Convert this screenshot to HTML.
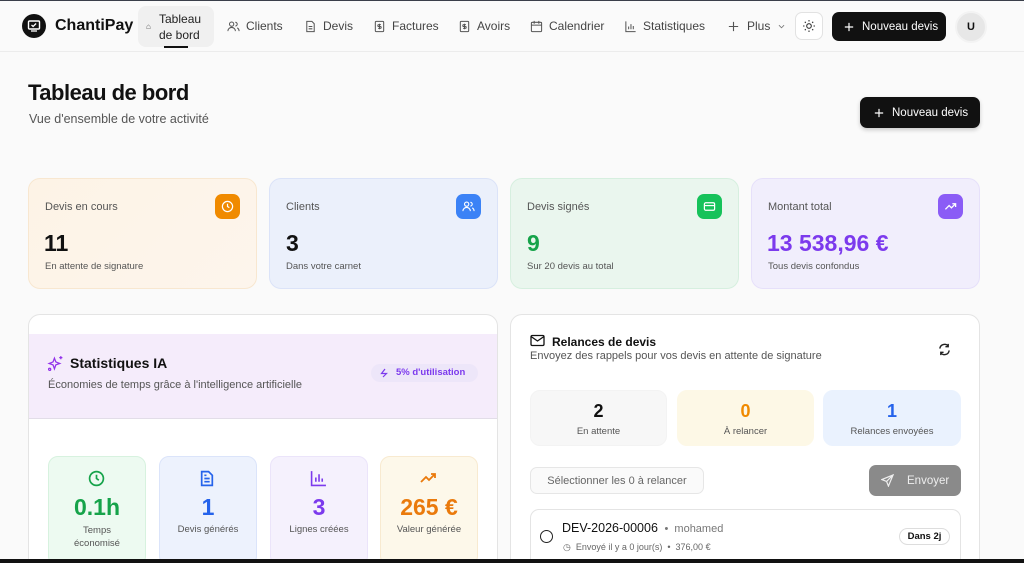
<!DOCTYPE html>
<html style="overflow:hidden;height:563px"><head><meta charset="utf-8"><style>
*{box-sizing:border-box;margin:0;padding:0}
body{width:1024px;height:563px;overflow:hidden;background:#fafafa;font-family:"Liberation Sans",sans-serif;color:#111;position:relative}
.a{position:absolute}
.hdr{left:0;top:0;width:1024px;height:52px;background:#fafafa;border-top:1px solid #3a3f4a;border-bottom:1px solid #ececec}
.nav{font-size:12px;color:#444;display:flex;align-items:center;gap:6px;top:19px}
.nav svg{width:13px;height:13px}
.card{border-radius:12px;border:1px solid}
.lbl{font-size:11px;color:#555}
.ic{width:25px;height:25px;border-radius:7px;display:flex;align-items:center;justify-content:center}
.big{font-size:23px;font-weight:bold}
.sub{font-size:9.5px;color:#555}
.mini{border-radius:10px;border:1px solid;text-align:center}
</style></head><body>
<div class="a hdr"></div>
<div class="a" style="left:22px;top:14px;width:24px;height:24px;border-radius:50%;background:#111"></div>
<svg class="a" style="left:27px;top:19px" width="14" height="14" viewBox="0 0 14 14"><rect x="1.5" y="2" width="11" height="8" rx="1" fill="none" stroke="#fff" stroke-width="1.4"/><path d="M4.5 6l1.6 1.5 3-3" fill="none" stroke="#fff" stroke-width="1.3"/><path d="M4 12h6" stroke="#fff" stroke-width="1.3"/></svg>
<div class="a" style="left:55px;top:17px;font-size:16px;font-weight:bold">ChantiPay</div>
<div class="a" style="left:138px;top:6px;width:76px;height:41px;background:#f0f0f0;border-radius:8px"></div>
<div class="a" style="left:146px;top:22px;font-size:8px;color:#555">⌂</div>
<div class="a" style="left:159px;top:11px;font-size:12px;line-height:16px;color:#222">Tableau<br>de bord</div>
<div class="a" style="left:164px;top:46px;width:24px;height:2px;background:#111"></div>
<div class="a nav" style="left:227px"><svg viewBox="0 0 14 14" fill="none" stroke="#555" stroke-width="1.1"><circle cx="5" cy="4.5" r="2.3"/><path d="M1 12c0-2.5 2-4 4-4s4 1.5 4 4M9 2.5a2 2 0 010 4M11 8.5c1.2.6 2 1.8 2 3.5"/></svg>Clients</div>
<div class="a nav" style="left:304px"><svg viewBox="0 0 14 14" fill="none" stroke="#555" stroke-width="1.1"><path d="M3 1.5h5.5L11 4v8.5H3z M5 7h4M5 9.5h4"/></svg>Devis</div>
<div class="a nav" style="left:373px"><svg viewBox="0 0 14 14" fill="none" stroke="#555" stroke-width="1.1"><rect x="2.5" y="1.5" width="9" height="11" rx="1"/><path d="M8.5 5H6.2a1 1 0 000 2h1.6a1 1 0 010 2H5.5M7 4v6"/></svg>Factures</div>
<div class="a nav" style="left:458px"><svg viewBox="0 0 14 14" fill="none" stroke="#555" stroke-width="1.1"><rect x="2.5" y="1.5" width="9" height="11" rx="1"/><path d="M8.5 5H6.2a1 1 0 000 2h1.6a1 1 0 010 2H5.5M7 4v6"/></svg>Avoirs</div>
<div class="a nav" style="left:530px"><svg viewBox="0 0 14 14" fill="none" stroke="#555" stroke-width="1.1"><rect x="1.5" y="2.5" width="11" height="10" rx="1"/><path d="M1.5 5.5h11M4.5 1v3M9.5 1v3"/></svg>Calendrier</div>
<div class="a nav" style="left:624px"><svg viewBox="0 0 14 14" fill="none" stroke="#555" stroke-width="1.1"><path d="M2 1.5v11h10.5M5 10V7M7.5 10V4.5M10 10V6.5"/></svg>Statistiques</div>
<div class="a nav" style="left:727px;gap:7px"><svg viewBox="0 0 14 14" fill="none" stroke="#555" stroke-width="1.2"><path d="M7 2v10M2 7h10"/></svg>Plus <svg viewBox="0 0 14 14" style="width:9px;height:9px" fill="none" stroke="#777" stroke-width="1.3"><path d="M3 5l4 4 4-4"/></svg></div>
<div class="a" style="left:795px;top:12px;width:28px;height:28px;border:1px solid #e2e2e2;border-radius:7px;background:#fff"></div>
<svg class="a" style="left:802px;top:19px" width="14" height="14" viewBox="0 0 14 14" fill="none" stroke="#333" stroke-width="1.1"><circle cx="7" cy="7" r="2.3"/><path d="M7 1v1.5M7 11.5V13M1 7h1.5M11.5 7H13M2.8 2.8l1 1M10.2 10.2l1 1M2.8 11.2l1-1M10.2 3.8l1-1"/></svg>
<div class="a" style="left:832px;top:12px;width:114px;height:29px;background:#111;border-radius:7px;color:#fff;font-size:11.5px;display:flex;align-items:center;padding-left:12px;gap:8px;white-space:nowrap"><svg width="10" height="10" viewBox="0 0 12 12" stroke="#fff" stroke-width="1.4"><path d="M6 1v10M1 6h10"/></svg>Nouveau devis</div>
<div class="a" style="left:955px;top:11px;width:32px;height:32px;border-radius:50%;background:#e7e7e7;border:2px solid #f3f3f3;text-align:center;line-height:28px;font-size:11px;font-weight:bold">U</div>

<div class="a" style="left:28px;top:80px;font-size:22px;font-weight:bold;letter-spacing:-.5px">Tableau de bord</div>
<div class="a" style="left:29px;top:112px;font-size:12.5px;color:#555">Vue d'ensemble de votre activité</div>
<div class="a" style="left:860px;top:97px;width:120px;height:31px;background:#111;border-radius:7px;color:#fff;font-size:11.5px;display:flex;align-items:center;padding-left:14px;gap:8px;white-space:nowrap;box-shadow:0 2px 4px rgba(0,0,0,.2)"><svg width="10" height="10" viewBox="0 0 12 12" stroke="#fff" stroke-width="1.4"><path d="M6 1v10M1 6h10"/></svg>Nouveau devis</div>

<div class="a card" style="left:28px;top:178px;width:229px;height:111px;background:linear-gradient(135deg,#fdf3e6,#fdf5ec);border-color:#f8e7d0"></div>
<div class="a lbl" style="left:45px;top:201px">Devis en cours</div>
<div class="a ic" style="left:215px;top:194px;background:#f08a00"><svg width="13" height="13" viewBox="0 0 14 14" fill="none" stroke="#fff" stroke-width="1.3"><circle cx="7" cy="7" r="5.5"/><path d="M7 4v3l2 1.2"/></svg></div>
<div class="a big" style="left:44px;top:230px">11</div>
<div class="a sub" style="left:45px;top:261px">En attente de signature</div>

<div class="a card" style="left:269px;top:178px;width:229px;height:111px;background:#ebf0fb;border-color:#dbe3f8"></div>
<div class="a lbl" style="left:286px;top:201px">Clients</div>
<div class="a ic" style="left:456px;top:194px;background:#3b82f6"><svg width="13" height="13" viewBox="0 0 14 14" fill="none" stroke="#fff" stroke-width="1.2"><circle cx="5" cy="4.5" r="2.3"/><path d="M1 12c0-2.5 2-4 4-4s4 1.5 4 4M9 2.5a2 2 0 010 4M11 8.5c1.2.6 2 1.8 2 3.5"/></svg></div>
<div class="a big" style="left:286px;top:230px">3</div>
<div class="a sub" style="left:286px;top:261px">Dans votre carnet</div>

<div class="a card" style="left:510px;top:178px;width:229px;height:111px;background:#eaf6ee;border-color:#d6efdf"></div>
<div class="a lbl" style="left:527px;top:201px">Devis signés</div>
<div class="a ic" style="left:697px;top:194px;background:#16c25a"><svg width="13" height="13" viewBox="0 0 14 14" fill="none" stroke="#fff" stroke-width="1.3"><rect x="1.5" y="3" width="11" height="8" rx="1.5"/><path d="M1.5 6h11"/></svg></div>
<div class="a big" style="left:527px;top:230px;color:#16a34a">9</div>
<div class="a sub" style="left:527px;top:261px">Sur 20 devis au total</div>

<div class="a card" style="left:751px;top:178px;width:229px;height:111px;background:#f1eefc;border-color:#e6e0fa"></div>
<div class="a lbl" style="left:768px;top:201px">Montant total</div>
<div class="a ic" style="left:938px;top:194px;background:#8b5cf6"><svg width="13" height="13" viewBox="0 0 14 14" fill="none" stroke="#fff" stroke-width="1.4"><path d="M1.5 10l4-4 2.5 2.5 4.5-4.5M9 4h3.5v3.5"/></svg></div>
<div class="a big" style="left:767px;top:230px;color:#7c3aed">13 538,96 €</div>
<div class="a sub" style="left:768px;top:261px">Tous devis confondus</div>

<div class="a" style="left:28px;top:314px;width:470px;height:245px;background:#fff;border:1px solid #e4e4e4;border-bottom:none;border-radius:12px 12px 0 0;overflow:hidden">
 <div style="position:absolute;left:0;top:19px;width:100%;height:85px;background:#f5ecfb;border-bottom:1px solid #e2dde8"></div>
</div>
<svg class="a" style="left:47px;top:355px" width="17" height="17" viewBox="0 0 16 16" fill="none" stroke="#9333ea" stroke-width="1.2"><path d="M7 3l1.3 3.5L12 8l-3.7 1.3L7 13l-1.3-3.7L2 8l3.7-1.5z"/><path d="M13 1v3M11.5 2.5h3"/><circle cx="2.5" cy="13.5" r="1"/></svg>
<div class="a" style="left:70px;top:355px;font-size:14px;font-weight:bold">Statistiques IA</div>
<div class="a" style="left:48px;top:379px;font-size:11px;color:#555">Économies de temps grâce à l'intelligence artificielle</div>
<div class="a" style="left:371px;top:364px;width:107px;height:18px;border-radius:9px;background:#ede6f9;font-size:9.5px;font-weight:bold;color:#7c3aed;line-height:18px;padding-left:25px">5% d'utilisation</div>
<svg class="a" style="left:379px;top:368px" width="10" height="10" viewBox="0 0 10 10" fill="none" stroke="#7c3aed" stroke-width="1.2"><path d="M6 1L2.5 5.5h5L4 9"/></svg>

<div class="a mini" style="left:48px;top:456px;width:98px;height:110px;background:#edfaf1;border-color:#d7f2df"></div>
<svg class="a" style="left:88px;top:470px" width="17" height="17" viewBox="0 0 16 16" fill="none" stroke="#16a34a" stroke-width="1.6"><circle cx="8" cy="8" r="6.5"/><path d="M8 4.5V8l2.2 1.6"/></svg>
<div class="a" style="left:48px;top:494px;width:98px;text-align:center;font-size:23px;font-weight:bold;color:#16a34a">0.1h</div>
<div class="a" style="left:48px;top:524px;width:98px;text-align:center;font-size:9.5px;color:#555;line-height:13px">Temps<br>économisé</div>

<div class="a mini" style="left:159px;top:456px;width:98px;height:110px;background:#edf2fd;border-color:#dbe4fa"></div>
<svg class="a" style="left:199px;top:470px" width="16" height="17" viewBox="0 0 14 16" fill="none" stroke="#2563eb" stroke-width="1.6"><path d="M2 1.5h6.5L12 5v9.5H2z M4.5 8h5M4.5 11h5M4.5 5h2"/></svg>
<div class="a" style="left:159px;top:494px;width:98px;text-align:center;font-size:23px;font-weight:bold;color:#2563eb">1</div>
<div class="a" style="left:159px;top:524px;width:98px;text-align:center;font-size:9.5px;color:#555">Devis générés</div>

<div class="a mini" style="left:270px;top:456px;width:98px;height:110px;background:#f5f1fd;border-color:#ebe4fa"></div>
<svg class="a" style="left:310px;top:470px" width="17" height="17" viewBox="0 0 16 16" fill="none" stroke="#7c3aed" stroke-width="1.5"><path d="M1.5 1v13.5H15M5.5 11V7M8.5 11V4M11.5 11V8"/></svg>
<div class="a" style="left:270px;top:494px;width:98px;text-align:center;font-size:23px;font-weight:bold;color:#7c3aed">3</div>
<div class="a" style="left:270px;top:524px;width:98px;text-align:center;font-size:9.5px;color:#555">Lignes créées</div>

<div class="a mini" style="left:380px;top:456px;width:98px;height:110px;background:#fdf8ea;border-color:#f8ead0"></div>
<svg class="a" style="left:420px;top:472px" width="18" height="12" viewBox="0 0 18 12" fill="none" stroke="#ea7a0c" stroke-width="1.8"><path d="M1 10l5-5 3 3 6-6M11 2h4v4"/></svg>
<div class="a" style="left:380px;top:494px;width:98px;text-align:center;font-size:23px;font-weight:bold;color:#ea7a0c">265 €</div>
<div class="a" style="left:380px;top:524px;width:98px;text-align:center;font-size:9.5px;color:#555">Valeur générée</div>

<div class="a" style="left:510px;top:314px;width:470px;height:245px;background:#fff;border:1px solid #e4e4e4;border-bottom:none;border-radius:12px 12px 0 0"></div>
<svg class="a" style="left:530px;top:334px" width="15" height="13" viewBox="0 0 15 13" fill="none" stroke="#111" stroke-width="1.3"><rect x="1" y="1.5" width="13" height="10" rx="1.2"/><path d="M1 2.5l6.5 4.5 6.5-4.5"/></svg>
<div class="a" style="left:552px;top:335px;font-size:12px;font-weight:bold">Relances de devis</div>
<div class="a" style="left:530px;top:350px;font-size:11px;color:#555">Envoyez des rappels pour vos devis en attente de signature</div>
<svg class="a" style="left:938px;top:343px" width="13" height="13" viewBox="0 0 14 14" fill="none" stroke="#222" stroke-width="1.5"><path d="M2 6a5 5 0 019-2.5M12 8a5 5 0 01-9 2.5M11 1v3h-3M3 13v-3h3"/></svg>

<div class="a mini" style="left:530px;top:390px;width:137px;height:56px;background:#f7f7f7;border-color:#f3f3f3"></div>
<div class="a" style="left:530px;top:401px;width:137px;text-align:center;font-size:18px;font-weight:bold">2</div>
<div class="a" style="left:530px;top:426px;width:137px;text-align:center;font-size:9.5px;color:#555">En attente</div>
<div class="a mini" style="left:677px;top:390px;width:137px;height:56px;background:#fdf8e6;border-color:#fdf8e6"></div>
<div class="a" style="left:677px;top:401px;width:137px;text-align:center;font-size:18px;font-weight:bold;color:#f08a00">0</div>
<div class="a" style="left:677px;top:426px;width:137px;text-align:center;font-size:9.5px;color:#555">À relancer</div>
<div class="a mini" style="left:823px;top:390px;width:138px;height:56px;background:#eaf2fe;border-color:#eaf2fe"></div>
<div class="a" style="left:823px;top:401px;width:138px;text-align:center;font-size:18px;font-weight:bold;color:#2563eb">1</div>
<div class="a" style="left:823px;top:426px;width:138px;text-align:center;font-size:9.5px;color:#555">Relances envoyées</div>

<div class="a" style="left:530px;top:467px;width:174px;height:27px;border:1px solid #e6e6e6;border-radius:7px;background:#fafafa;font-size:11px;color:#666;display:flex;align-items:center;justify-content:center">Sélectionner les 0 à relancer</div>
<div class="a" style="left:869px;top:465px;width:92px;height:31px;border-radius:7px;background:#8a8a8a;color:#eee;font-size:11.5px;display:flex;align-items:center;padding-left:38px">Envoyer</div>
<svg class="a" style="left:881px;top:474px" width="13" height="13" viewBox="0 0 14 14" fill="none" stroke="#eee" stroke-width="1.3"><path d="M13 1L1 6l5 2 2 5z M13 1L6 8"/></svg>

<div class="a" style="left:530px;top:509px;width:431px;height:50px;border:1px solid #e4e4e4;border-bottom:none;border-radius:9px 9px 0 0;background:#fff"></div>
<div class="a" style="left:540px;top:530px;width:13px;height:13px;border:1.3px solid #222;border-radius:50%"></div>
<div class="a" style="left:562px;top:521px;font-size:12.5px;color:#111">DEV-2026-00006 <span style="color:#777;font-size:11px">&nbsp;•&nbsp; mohamed</span></div>
<div class="a" style="left:563px;top:542px;font-size:9px;color:#666">◷&nbsp; Envoyé il y a 0 jour(s) &nbsp;•&nbsp; 376,00 €</div>
<div class="a" style="left:899px;top:528px;width:51px;height:17px;border:1px solid #ddd;border-radius:9px;font-size:9.5px;font-weight:bold;text-align:center;line-height:15px">Dans 2j</div>

<div class="a" style="left:0;top:559px;width:1024px;height:4px;background:#111"></div>
</body></html>
